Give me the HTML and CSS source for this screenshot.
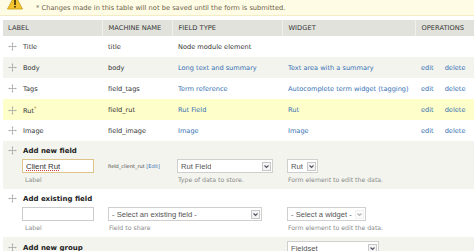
FILE: index.html
```html
<!DOCTYPE html>
<html>
<head>
<meta charset="utf-8">
<link rel="stylesheet" href="styles.css">
</head>
<body>
<div class="warning">
  <svg class="warn-icon" width="16" height="14" viewBox="0 0 16 14"><path d="M8 -3 L15.5 11 L0.5 11 Z" fill="#f4c430" stroke="#c89a10" stroke-width="0.8"/><rect x="7.2" y="1.5" width="1.6" height="5.5" fill="#3a2a00"/><rect x="7.2" y="8" width="1.6" height="1.6" fill="#3a2a00"/></svg>
  <span>* Changes made in this table will not be saved until the form is submitted.</span>
</div>
<table class="fields">
  <colgroup>
    <col class="c1"><col class="c2"><col class="c3"><col class="c4"><col class="c5">
  </colgroup>
  <thead>
    <tr><th>Label</th><th>Machine name</th><th>Field type</th><th>Widget</th><th>Operations</th></tr>
  </thead>
  <tbody>
    <tr class="row odd">
      <td class="lbl"><span class="handle"></span>Title</td><td>title</td><td>Node module element</td><td></td><td></td>
    </tr>
    <tr class="row even">
      <td class="lbl"><span class="handle"></span>Body</td><td>body</td><td><a>Long text and summary</a></td><td><a>Text area with a summary</a></td><td class="ops"><a>edit</a><a>delete</a></td>
    </tr>
    <tr class="row odd">
      <td class="lbl"><span class="handle"></span>Tags</td><td>field_tags</td><td><a>Term reference</a></td><td><a>Autocomplete term widget (tagging)</a></td><td class="ops"><a>edit</a><a>delete</a></td>
    </tr>
    <tr class="row changed">
      <td class="lbl"><span class="handle"></span>Rut<sup class="star">*</sup></td><td>field_rut</td><td><a>Rut Field</a></td><td><a>Rut</a></td><td class="ops"><a>edit</a><a>delete</a></td>
    </tr>
    <tr class="row odd">
      <td class="lbl"><span class="handle"></span>Image</td><td>field_image</td><td><a>Image</a></td><td><a>Image</a></td><td class="ops"><a>edit</a><a>delete</a></td>
    </tr>
    <tr class="add even">
      <td class="lbl-add">
        <div class="add-title"><span class="handle"></span>Add new field</div>
        <div class="add-input"><input class="txt focus" type="text" value="Client Rut"><div class="desc">Label</div></div>
      </td>
      <td class="under"><div class="machine">field_client_rut <a>[Edit]</a></div></td>
      <td class="under"><div class="sel w96"><span>Rut Field</span><i class="arr"></i></div><div class="desc">Type of data to store.</div></td>
      <td class="under"><div class="sel w31"><span>Rut</span><i class="arr"></i></div><div class="desc">Form element to edit the data.</div></td>
      <td></td>
    </tr>
    <tr class="add odd">
      <td class="lbl-add">
        <div class="add-title"><span class="handle"></span>Add existing field</div>
        <div class="add-input"><input class="txt" type="text" value=""><div class="desc">Label</div></div>
      </td>
      <td class="under" colspan="2"><div class="sel w154"><span>- Select an existing field -</span><i class="arr"></i></div><div class="desc">Field to share</div></td>
      <td class="under"><div class="sel w79 disabled"><span>- Select a widget -</span><i class="arr"></i></div><div class="desc">Form element to edit the data.</div></td>
      <td></td>
    </tr>
    <tr class="add even last">
      <td class="lbl-add">
        <div class="add-title"><span class="handle"></span>Add new group</div>
      </td>
      <td></td>
      <td></td>
      <td class="group"><div class="sel w92"><span>Fieldset</span><i class="arr"></i></div></td>
      <td></td>
    </tr>
  </tbody>
</table>
</body>
</html>
```
FILE: styles.css
```css
html, body {
  margin: 0;
  padding: 0;
  background: #fff;
  overflow: hidden;
}
body {
  width: 474px;
  height: 251px;
  font-family: "DejaVu Sans", Verdana, sans-serif;
  font-size: 6.6px;
  color: #333;
}
.warning {
  height: 16px;
  background: #fffce6;
  border-bottom: 1px solid #f3ecc4;
  display: flex;
  align-items: center;
  color: #6b6246;
  font-size: 6.7px;
  box-sizing: border-box;
}
.warn-icon {
  margin-left: 7px;
  margin-right: 13px;
  margin-top: -5px;
  flex: none;
}
.fields {
  margin-top: 4px;
  margin-left: 3px;
  border-collapse: collapse;
  table-layout: fixed;
  width: 471px;
}
.c1 { width: 99px; }
.c2 { width: 70px; }
.c3 { width: 110px; }
.c4 { width: 133px; }
.c5 { width: 59px; }
th {
  background: #e1e2dc;
  height: 16px;
  padding: 0 0 0 6px;
  text-align: left;
  font-weight: normal;
  text-transform: uppercase;
  font-size: 6.7px;
  color: #333;
  border-left: 1px solid #f1f1ec;
  white-space: nowrap;
}
th:first-child {
  border-left: none;
  padding-left: 5px;
}
td {
  padding: 0 0 0 6px;
  white-space: nowrap;
  overflow: visible;
}
.row td {
  height: 21px;
}
.odd { background: #fff; }
.even { background: #f3f4ee; }
.changed { background: #fefeca; }
a {
  color: #3670b2;
  text-decoration: none;
}
.ops a {
  margin-right: 11px;
}
.lbl {
  padding-left: 5px;
}
.handle {
  display: inline-block;
  width: 9px;
  height: 9px;
  margin-right: 6px;
  vertical-align: -2px;
  background: url("data:image/svg+xml;utf8,<svg xmlns='http://www.w3.org/2000/svg' width='9' height='9' viewBox='0 0 9 9'><path d='M4.5 1V8M1 4.5H8' stroke='%23a8a8a8' stroke-width='0.8'/><path d='M4.5 0.2L3.4 1.5H5.6Z M4.5 8.8L3.4 7.5H5.6Z M0.2 4.5L1.5 3.4V5.6Z M8.8 4.5L7.5 3.4V5.6Z' fill='%23a8a8a8'/></svg>") no-repeat;
}
.star {
  font-size: 5px;
  color: #b08030;
  vertical-align: 3px;
}
.add td {
  vertical-align: top;
}
.lbl-add {
  padding-left: 5px;
  height: 48px;
}
.last .lbl-add {
  height: 20px;
}
.add-title {
  font-weight: bold;
  font-size: 7px;
  color: #222;
  margin-top: 5px;
  height: 11px;
  line-height: 11px;
}
.last .add-title {
  margin-top: 6px;
}
.add-input {
  margin-left: 14px;
  margin-top: 2px;
}
.txt {
  display: block;
  box-sizing: border-box;
  width: 72px;
  height: 14px;
  margin: 0;
  padding: 0 3px;
  border: 1px solid #ccc;
  font-family: "Liberation Sans", Arial, sans-serif;
  font-size: 7.8px;
  color: #333;
  background: #fff;
  outline: none;
}
.txt.focus {
  border-color: #e0c58a;
  text-decoration: underline dotted #d04040;
}
.desc {
  font-size: 6.2px;
  color: #8a8a8a;
  margin-top: 3px;
  margin-left: 3px;
  line-height: 8px;
}
.under {
  padding-top: 18px;
}
.under .desc {
  margin-left: 1px;
}
td.under:nth-child(3), td.under:nth-child(4), td.group {
  padding-left: 5px;
}
.machine {
  font-size: 5px;
  color: #444;
  margin-top: 4px;
}
.sel {
  box-sizing: border-box;
  height: 14px;
  border: 1px solid #cfcfcf;
  background: #fff;
  display: flex;
  align-items: center;
  justify-content: space-between;
  padding: 0 1px 0 3px;
  font-family: "Liberation Sans", Arial, sans-serif;
  font-size: 7.6px;
  color: #555;
}
.sel span {
  white-space: nowrap;
  overflow: hidden;
}
.w96 { width: 96px; }
.w31 { width: 31px; }
.w154 { width: 154px; }
.w79 { width: 79px; }
.w92 { width: 92px; }
.arr {
  flex: none;
  box-sizing: border-box;
  width: 9px;
  height: 9px;
  border: 1px solid #c8c8c8;
  background: #f4f4f4 url("data:image/svg+xml;utf8,<svg xmlns='http://www.w3.org/2000/svg' width='7' height='7' viewBox='0 0 7 7'><path d='M1.5 2.5L3.5 4.5L5.5 2.5' fill='none' stroke='%23556' stroke-width='1.1'/></svg>") no-repeat center;
}
.disabled .arr {
  background-color: #fafafa;
  border-color: #e0e0e0;
  opacity: 0.45;
}
.group {
  padding-top: 4px;
}
```
